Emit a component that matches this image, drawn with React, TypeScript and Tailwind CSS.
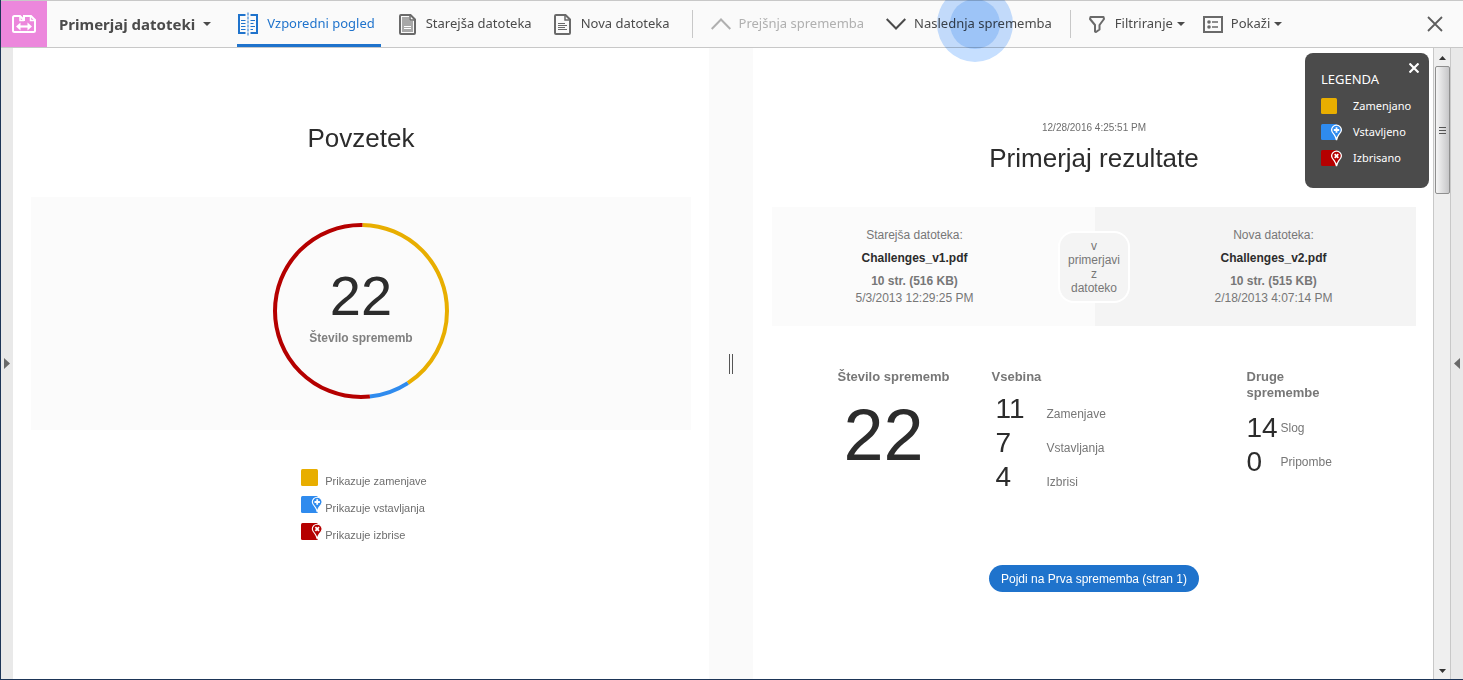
import type { ReactNode } from "react";
import clsx from "clsx";

type ChangeKind = "replaced" | "inserted" | "deleted";

interface LegendItem {
  kind: ChangeKind;
  label: string;
  description: string;
}

interface Stat {
  value: number;
  label: string;
}

const LEGEND: LegendItem[] = [
  { kind: "replaced", label: "Zamenjano", description: "Prikazuje zamenjave" },
  { kind: "inserted", label: "Vstavljeno", description: "Prikazuje vstavljanja" },
  { kind: "deleted", label: "Izbrisano", description: "Prikazuje izbrise" },
];

const KIND_COLORS: Record<ChangeKind, string> = {
  replaced: "#e8ae00",
  inserted: "#2f8bee",
  deleted: "#b50000",
};

// Ring arcs in degrees, clockwise from the top
const RING: { kind: ChangeKind; start: number; sweep: number }[] = [
  { kind: "replaced", start: 1, sweep: 146 },
  { kind: "inserted", start: 147, sweep: 27 },
  { kind: "deleted", start: 174, sweep: 187 },
];

const CONTENT_STATS: Stat[] = [
  { value: 11, label: "Zamenjave" },
  { value: 7, label: "Vstavljanja" },
  { value: 4, label: "Izbrisi" },
];

const OTHER_STATS: Stat[] = [
  { value: 14, label: "Slog" },
  { value: 0, label: "Pripombe" },
];

/* ---------- Icons ---------- */

function LogoIcon() {
  return (
    <svg width="24" height="18" viewBox="0 0 24 18" fill="none" stroke="#fff" strokeWidth="2">
      <path d="M12 6V1H19L23 5V15.500Q23 17 21.500 17H2.500Q1 17 1 15.500V2.500Q1 1 2.500 1H8L12 5" />
      <path d="M8 1V5.500H12M18.500 1V5.500H23" strokeWidth="1.500" />
      <path d="M6 11.500H18" strokeWidth="2.200" />
      <path d="M8.500 7.500L4 11.500L8.500 15.500ZM15.500 7.500L20 11.500L15.500 15.500Z" fill="#fff" stroke="none" />
    </svg>
  );
}

function SideBySideIcon() {
  return (
    <svg width="22" height="24" viewBox="0 0 22 24" fill="none" stroke="#1f73cc">
      <path d="M8.500 3H2V21H8.500M13.500 3H20V21H13.500" strokeWidth="2" />
      <path d="M11 0.500V24" strokeWidth="1" strokeDasharray="3 1" />
      <path d="M4 8.500H8.500M4 11.500H8.500M4 14.500H8.500M4 17.500H8.500M13.500 8.500H18M13.500 11.500H16.500M13.500 14.500H18M13.500 17.500H16" />
    </svg>
  );
}

function DocIcon({ filled = false }: { filled?: boolean }) {
  return (
    <svg width="17" height="21" viewBox="0 0 17 21" fill="none" stroke="#6a6a6a">
      <path d="M2 1H11.500L16 5.500V19Q16 20 15 20H2Q1 20 1 19V2Q1 1 2 1Z" strokeWidth="2" />
      {filled && <path d="M3 3H10V7H14V18H3Z" fill="#a8a8a8" stroke="none" />}
      <path d="M11 1.500V6H15.500" strokeWidth="1.500" />
      {filled ? (
        <path d="M5 12.500H12M5 14.500H12" stroke="#fff" />
      ) : (
        <path d="M4 9.500H11M4 11.500H13M4 13.500H11M4 15.500H13" />
      )}
    </svg>
  );
}

function Chevron({ up = false }: { up?: boolean }) {
  return (
    <svg width="20" height="12" viewBox="0 0 20 12" fill="none" stroke="currentColor" strokeWidth="2">
      <path d={up ? "M0.700 11L10 1.500L19.300 11" : "M0.700 1L10 10.500L19.300 1"} />
    </svg>
  );
}

function FilterIcon() {
  return (
    <svg width="16" height="17" viewBox="0 0 16 17" fill="none" stroke="#6a6a6a" strokeWidth="2" strokeLinejoin="round">
      <path d="M1.500 1H14.500L15 3L10.500 9V13.500L7 16L6 15.500V9L1 3Z" />
    </svg>
  );
}

function ShowIcon() {
  return (
    <svg width="20" height="17" viewBox="0 0 20 17" fill="none" stroke="#6a6a6a">
      <path d="M1 1H19V16H1Z" strokeWidth="2" />
      <path d="M9 6H15M9 11H15" strokeWidth="1.500" />
      <circle cx="6" cy="6" r="1.800" fill="#6a6a6a" stroke="none" />
      <circle cx="6" cy="11" r="1.800" fill="#6a6a6a" stroke="none" />
    </svg>
  );
}

function Caret() {
  return (
    <svg width="8" height="4" viewBox="0 0 8 4" fill="currentColor">
      <path d="M0 0H8L4 4Z" />
    </svg>
  );
}

function Swatch({ kind, dark = false }: { kind: ChangeKind; dark?: boolean }) {
  const color = KIND_COLORS[kind];
  const pin = "M15.500 1.200a4.900 4.900 0 0 0-4.900 4.900c0 2 1.400 3.400 2.700 4.700 1 1.200 1.600 2.600 2.200 5.200.6-2.600 1.200-4 2.200-5.200 1.300-1.300 2.700-2.700 2.700-4.700a4.900 4.900 0 0 0-4.900-4.900Z";

  return (
    <svg width="22" height="17" viewBox="0 0 22 17" className="shrink-0">
      <rect width={dark ? 16 : 17} height={dark ? 16 : 17} rx="1.500" fill={color} />
      {kind !== "replaced" && (
        <g transform={dark ? undefined : "translate(0.700 0)"}>
          <path d={pin} fill={color} stroke="#fff" strokeWidth={dark ? 1.3 : 1.1} />
          <path
            d={kind === "inserted" ? "M15.500 3.300V8.700M12.800 6H18.200" : "M13.700 4.200L17.300 7.800M17.300 4.200L13.700 7.800"}
            stroke="#fff"
            strokeWidth="1.800"
          />
        </g>
      )}
    </svg>
  );
}

/* ---------- Toolbar ---------- */

interface ToolButtonProps {
  icon: ReactNode;
  label: string;
  active?: boolean;
  disabled?: boolean;
  menu?: boolean;
  className?: string;
  children?: ReactNode;
}

function ToolButton({ icon, label, active, disabled, menu, className, children }: ToolButtonProps) {
  return (
    <button
      type="button"
      disabled={disabled}
      className={clsx(
        "relative flex h-full items-center whitespace-nowrap text-[13px]",
        active && "text-[#1f73cc] shadow-[inset_0_-3px_#1f73cc]",
        disabled ? "text-[#b0b0b0]" : !active && "text-[#4b4b4b]",
        className
      )}
    >
      {icon}
      <span className="flex items-center gap-1">
        {label}
        {menu && <Caret />}
      </span>
      {children}
    </button>
  );
}

function Toolbar() {
  return (
    <header className="flex h-12 items-center border-y border-[#c8c8c8] bg-[#fafafa] font-['Noto_Sans',sans-serif]">
      <div className="flex h-full w-[46px] shrink-0 items-center justify-center bg-[#ec87dc]">
        <LogoIcon />
      </div>
      <button
        type="button"
        className="mr-[26px] ml-3 flex items-center gap-2 whitespace-nowrap text-[15px] font-bold text-[#4b4b4b]"
      >
        Primerjaj datoteki
        <Caret />
      </button>
      <nav className="flex h-full items-center">
        <ToolButton active icon={<SideBySideIcon />} label="Vzporedni pogled" className="gap-2 pr-1.5" />
        <ToolButton icon={<DocIcon filled />} label="Starejša datoteka" className="ml-[18px] gap-[10px]" />
        <ToolButton icon={<DocIcon />} label="Nova datoteka" className="ml-[22px] gap-[10px]" />
        <span className="mr-[18px] ml-[22px] h-7 w-px bg-[#c8c8c8]" />
        <ToolButton disabled icon={<Chevron up />} label="Prejšnja sprememba" className="mr-[22px] gap-2" />
        <ToolButton icon={<Chevron />} label="Naslednja sprememba" className="gap-2">
          {/* Tap highlight */}
          <span className="pointer-events-none absolute -top-[15px] left-[51px] flex size-19 items-center justify-center rounded-full bg-[#c6dfff] mix-blend-multiply">
            <span className="size-[50px] rounded-full bg-[#a0c8fc]" />
          </span>
        </ToolButton>
        <span className="mr-[18px] ml-[18px] h-7 w-px bg-[#c8c8c8]" />
        <ToolButton menu icon={<FilterIcon />} label="Filtriranje" className="mr-[18px] gap-[10px]" />
        <ToolButton menu icon={<ShowIcon />} label="Pokaži" className="gap-2" />
      </nav>
      <button type="button" aria-label="Zapri" className="mr-5 ml-auto text-[#5e5e5e]">
        <svg width="16" height="16" viewBox="0 0 16 16" fill="none" stroke="currentColor" strokeWidth="1.800">
          <path d="M1 1L15 15M15 1L1 15" />
        </svg>
      </button>
    </header>
  );
}

/* ---------- Panes ---------- */

function SummaryPane() {
  return (
    <section className="flex-1 px-[18px] pt-[74px]">
      <h1 className="text-center text-[26px] leading-8 text-[#2c2c2c]">Povzetek</h1>
      <div className="mt-[43px] flex justify-center bg-[#fbfbfb] pt-[26px] pb-[31px]">
        <div className="relative flex size-44 flex-col items-center justify-center pb-3">
          <svg className="absolute inset-0 -rotate-90" viewBox="0 0 176 176" fill="none" strokeWidth="4">
            {RING.map((arc) => (
              <circle
                key={arc.kind}
                cx="88"
                cy="88"
                r="86"
                pathLength={360}
                stroke={KIND_COLORS[arc.kind]}
                strokeDasharray={`${arc.sweep} ${360 - arc.sweep}`}
                strokeDashoffset={-arc.start}
              />
            ))}
          </svg>
          <span className="text-[56px] leading-16 text-[#2c2c2c]">22</span>
          <span className="mt-0.5 text-xs font-bold text-[#808080]">Število sprememb</span>
        </div>
      </div>
      <div className="mt-[39px] flex justify-center pl-1.5">
        <ul className="flex flex-col gap-[10px]">
          {LEGEND.map((item) => (
            <li key={item.kind} className="flex items-start gap-[2px] text-[11px] text-[#6e6e6e]">
              <Swatch kind={item.kind} />
              <span className="h-[17px] pt-1">{item.description}</span>
            </li>
          ))}
        </ul>
      </div>
    </section>
  );
}

interface FileInfoProps {
  title: string;
  name: string;
  size: string;
  date: string;
  className: string;
}

function FileInfo({ title, name, size, date, className }: FileInfoProps) {
  return (
    <div className={clsx("flex-1 pt-5 pb-[19px] text-center text-xs leading-[17px] text-[#777]", className)}>
      <p>{title}</p>
      <p className="my-1.5 font-bold text-[#2c2c2c]">{name}</p>
      <p className="font-bold">{size}</p>
      <p>{date}</p>
    </div>
  );
}

function ResultsPane() {
  return (
    <section className="flex-1 pt-[72px] pr-[17px] pl-[19px]">
      <p className="text-center text-[10px] leading-4 text-[#6e6e6e]">12/28/2016 4:25:51 PM</p>
      <h1 className="mt-1.5 text-center text-[26px] leading-8 text-[#2c2c2c]">Primerjaj rezultate</h1>

      <div className="relative mt-[33px] flex">
        <FileInfo
          title="Starejša datoteka:"
          name="Challenges_v1.pdf"
          size="10 str. (516 KB)"
          date="5/3/2013 12:29:25 PM"
          className="bg-[#fbfbfb] pr-[38px]"
        />
        <FileInfo
          title="Nova datoteka:"
          name="Challenges_v2.pdf"
          size="10 str. (515 KB)"
          date="2/18/2013 4:07:14 PM"
          className="bg-[#f4f4f4] pl-9"
        />
        <div className="absolute inset-0 flex items-center justify-center">
          <p className="flex size-[72px] items-center justify-center rounded-2xl border-2 border-white bg-[#f4f4f4] text-center text-xs leading-[14px] text-[#777]">
            v
            <br />
            primerjavi
            <br />
            z
            <br />
            datoteko
          </p>
        </div>
      </div>

      <div className="mt-[43px] flex justify-center pl-2 text-[13px] text-[#777]">
        <div className="w-[154px]">
          <h2 className="leading-4 font-bold">Število sprememb</h2>
          <p className="pt-3.5 pl-1.5 text-[72px] leading-[72px] text-[#2c2c2c]">22</p>
        </div>
        <div className="w-[255px]">
          <h2 className="leading-4 font-bold">Vsebina</h2>
          <dl className="pt-[7px] pl-1">
            {CONTENT_STATS.map((stat) => (
              <div key={stat.label} className="flex flex-row-reverse items-baseline justify-end text-xs">
                <dt>{stat.label}</dt>
                <dd className="w-[51px] text-[28px] leading-[34px] text-[#2c2c2c]">{stat.value}</dd>
              </div>
            ))}
          </dl>
        </div>
        <div className="w-[112px]">
          <h2 className="w-20 leading-4 font-bold">Druge spremembe</h2>
          <dl className="pt-2.5">
            {OTHER_STATS.map((stat) => (
              <div key={stat.label} className="flex flex-row-reverse items-center justify-end text-xs">
                <dt>{stat.label}</dt>
                <dd className="w-[34px] text-[28px] leading-[34px] text-[#2c2c2c]">{stat.value}</dd>
              </div>
            ))}
          </dl>
        </div>
      </div>

      <div className="mt-[71px] flex justify-center">
        <button type="button" className="h-[27px] rounded-full bg-[#1f73cc] px-3 text-xs text-white">
          Pojdi na Prva sprememba (stran 1)
        </button>
      </div>
    </section>
  );
}

function LegendPanel() {
  return (
    <aside className="absolute top-[5px] right-1 h-[135px] w-[124px] rounded-lg bg-[#4b4b4b] px-4 pt-4 font-['Noto_Sans',sans-serif] text-white">
      <button type="button" aria-label="Zapri legendo" className="absolute top-2.5 right-2.5">
        <svg width="10" height="10" viewBox="0 0 10 10" stroke="#fff" strokeWidth="2.200">
          <path d="M0.500 0.500L9.500 9.500M9.500 0.500L0.500 9.500" />
        </svg>
      </button>
      <h2 className="text-[13px] leading-5">LEGENDA</h2>
      <ul className="mt-1 text-[11px]">
        {LEGEND.map((item) => (
          <li key={item.kind} className="flex h-[26px] items-center gap-[10px]">
            <Swatch dark kind={item.kind} />
            {item.label}
          </li>
        ))}
      </ul>
    </aside>
  );
}

function Scrollbar() {
  return (
    <div className="flex w-[18px] shrink-0 flex-col items-center border-x border-[#c8c8c8] bg-[#efefef] pt-2 pb-1.5">
      <svg width="7" height="4" viewBox="0 0 7 4" fill="#333">
        <path d="M0 4H7L3.500 0Z" />
      </svg>
      <div className="mt-1.5 flex h-32 w-[15px] flex-col items-center justify-center gap-[2px] rounded-xs border border-[#8f8f8f] bg-linear-to-r from-[#f6f6f6] to-[#c6c6c8]">
        <span className="h-px w-[7px] bg-[#555]" />
        <span className="h-px w-[7px] bg-[#555]" />
        <span className="h-px w-[7px] bg-[#555]" />
      </div>
      <svg className="mt-auto" width="7" height="4" viewBox="0 0 7 4" fill="#333">
        <path d="M0 0H7L3.500 4Z" />
      </svg>
    </div>
  );
}

export default function App() {
  return (
    <div className="flex min-h-screen flex-col overflow-hidden border-b border-l border-[#1d3557] bg-white font-['Liberation_Sans',Arial,sans-serif]">
      <Toolbar />
      <main className="flex flex-1">
        <button type="button" aria-label="Odpri levo podokno" className="flex w-3 shrink-0 items-center bg-[#e9e9e9] pl-[3px]">
          <svg width="6" height="11" viewBox="0 0 6 11" fill="#6a6a6a">
            <path d="M0 0V11L6 5.500Z" />
          </svg>
        </button>
        <div className="flex flex-1">
          <div className="flex flex-[696]">
            <SummaryPane />
          </div>
          <div className="flex w-11 shrink-0 items-center justify-center gap-[2px] bg-[#fafafa]">
            <span className="h-5 w-px bg-[#555]" />
            <span className="h-5 w-px bg-[#555]" />
          </div>
          <div className="relative flex flex-[680]">
            <ResultsPane />
            <LegendPanel />
          </div>
        </div>
        <Scrollbar />
        <button type="button" aria-label="Odpri desno podokno" className="flex w-3 shrink-0 items-center justify-end bg-[#e9e9e9] pr-[3px]">
          <svg width="6" height="11" viewBox="0 0 6 11" fill="#6a6a6a">
            <path d="M6 0V11L0 5.500Z" />
          </svg>
        </button>
      </main>
    </div>
  );
}
